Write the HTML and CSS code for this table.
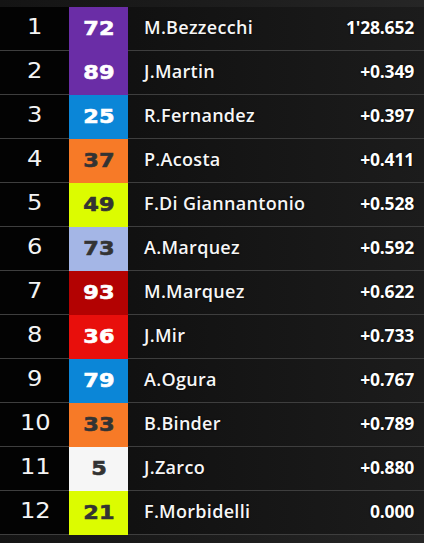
FILE: index.html
```html
<!DOCTYPE html>
<html>
<head>
<meta charset="utf-8">
<link rel="stylesheet" href="styles.css">
</head>
<body>
<div class="board">
  <div class="row"><div class="pos"><span>1</span></div><div class="num purple light"><span>72</span></div><div class="name">M.Bezzecchi</div><div class="time">1'28.652</div></div>
  <div class="row"><div class="pos"><span>2</span></div><div class="num purple light"><span>89</span></div><div class="name">J.Martin</div><div class="time">+0.349</div></div>
  <div class="row"><div class="pos"><span>3</span></div><div class="num blue light"><span>25</span></div><div class="name">R.Fernandez</div><div class="time">+0.397</div></div>
  <div class="row"><div class="pos"><span>4</span></div><div class="num orange"><span>37</span></div><div class="name">P.Acosta</div><div class="time">+0.411</div></div>
  <div class="row"><div class="pos"><span>5</span></div><div class="num yellow"><span>49</span></div><div class="name">F.Di Giannantonio</div><div class="time">+0.528</div></div>
  <div class="row"><div class="pos"><span>6</span></div><div class="num sky"><span>73</span></div><div class="name">A.Marquez</div><div class="time">+0.592</div></div>
  <div class="row"><div class="pos"><span>7</span></div><div class="num darkred light"><span>93</span></div><div class="name">M.Marquez</div><div class="time">+0.622</div></div>
  <div class="row"><div class="pos"><span>8</span></div><div class="num red light"><span>36</span></div><div class="name">J.Mir</div><div class="time">+0.733</div></div>
  <div class="row"><div class="pos"><span>9</span></div><div class="num blue light"><span>79</span></div><div class="name">A.Ogura</div><div class="time">+0.767</div></div>
  <div class="row"><div class="pos"><span>10</span></div><div class="num orange"><span>33</span></div><div class="name">B.Binder</div><div class="time">+0.789</div></div>
  <div class="row"><div class="pos"><span>11</span></div><div class="num white"><span>5</span></div><div class="name">J.Zarco</div><div class="time">+0.880</div></div>
  <div class="row"><div class="pos"><span>12</span></div><div class="num yellow"><span>21</span></div><div class="name">F.Morbidelli</div><div class="time">0.000</div></div>
</div>
</body>
</html>
```
FILE: styles.css
```css
html, body {
  margin: 0;
  padding: 0;
  background: linear-gradient(90deg, #141414 0%, #1e1e1e 60%, #262626 100%);
  width: 424px;
  height: 543px;
  overflow: hidden;
}
.board {
  padding-top: 7px;
  display: flex;
  flex-direction: column;
}
.row {
  display: grid;
  grid-template-columns: 69px 59px 1fr auto;
  height: 44px;
  background: linear-gradient(90deg, #0c0c0c 0%, #141414 50%, #1c1c1c 100%);
}
.pos, .name, .time {
  border-bottom: 1px solid #3e3e3e;
  display: flex;
  align-items: center;
  padding-bottom: 3px;
}
.pos {
  background: #030303;
  justify-content: center;
  color: #f4f4f4;
  font-family: "DejaVu Sans", sans-serif;
  font-size: 21px;
  font-weight: normal;
  padding-left: 1px;
}
.pos span {
  display: inline-block;
  transform: scaleX(1.15);
}
.num {
  display: flex;
  align-items: center;
  justify-content: center;
  font-family: "DejaVu Sans", sans-serif;
  font-weight: bold;
  font-size: 20px;
  color: #333;
  padding-bottom: 2px;
}
.num span {
  display: inline-block;
  transform: scaleX(1.12);
  -webkit-text-stroke: 0.6px currentColor;
}
.num.light { color: #fff; }
.purple { background: #6a2da6; }
.blue { background: #0b86d7; }
.orange { background: #f77a27; }
.yellow { background: #dcfc00; }
.sky { background: #a4b6e6; }
.darkred { background: #b30202; }
.red { background: #e80f0c; }
.white { background: #f6f6f6; }
.name {
  padding-left: 16px;
  color: #f6f6f6;
  font-family: "Open Sans", sans-serif;
  font-weight: 600;
  font-size: 18px;
  letter-spacing: 0.3px;
  text-shadow: 0 0 2px #000;
}
.time {
  padding-right: 10px;
  justify-content: flex-end;
  color: #fff;
  font-family: "Open Sans", sans-serif;
  font-weight: 700;
  font-size: 17.5px;
  letter-spacing: -0.2px;
  text-shadow: 0 0 2px #000, 0 0 1px #000;
}
```
